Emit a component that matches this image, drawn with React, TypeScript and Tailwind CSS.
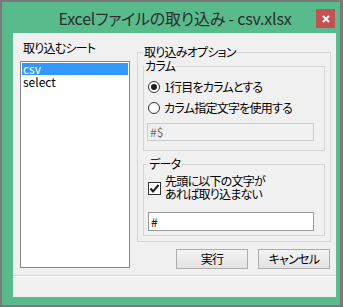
export default function App() {
  return (
    <div className="w-[343px] h-[307px] bg-[#7a7a7a] pt-[2px] pl-[2px] font-['Noto_Sans_CJK_JP','Noto_Sans',sans-serif] [font-feature-settings:'palt']">
      <div className="w-[338px] h-[303px] bg-[#58bb8b] flex flex-col">
        <div className="h-[31px] flex items-start">
          <div className="flex-1 pl-[32px] pt-[5px] text-center text-[16px] leading-[22px] text-[#2e2e2e] tracking-[-0.2px]">
            Excelファイルの取り込み - csv.xlsx
          </div>
          <div className="mt-[7px] mr-[5px] w-[19px] h-[19px] bg-[#c75050] flex items-center justify-center">
            <svg width="8" height="8" viewBox="0 0 8 8">
              <path d="M1 1 L7 7 M7 1 L1 7" stroke="#ffffff" strokeWidth="2" />
            </svg>
          </div>
        </div>
        <div className="ml-[11px] w-[323px] h-[264px] bg-[#f0f0f0] flex flex-col text-[12px] text-black tracking-[-0.75px]">
          <div className="flex items-start">
            <div className="ml-[7px] w-[110px] pt-[7px] flex flex-col">
              <div className="leading-[16px] pl-[3px]">取り込むシート</div>
              <div className="mt-[5px] h-[207px] border border-[#828790] bg-white p-[1px] tracking-normal">
                <div className="h-[12px] leading-[12px] bg-[#3399ff] text-white pl-[1px]">csv</div>
                <div className="h-[13px] leading-[13px] pl-[1px]">select</div>
              </div>
            </div>
            <div className="ml-[7px] w-[194px] pt-[12px] flex flex-col">
              <fieldset className="m-0 min-w-0 border border-[#d5d5d5] px-[5px] pb-[5px] pt-0">
                <legend className="px-[1px] leading-[14px]">取り込みオプション</legend>
                <fieldset className="m-0 min-w-0 border border-[#d5d5d5] px-0 pt-[3px] pb-[9px]">
                  <legend className="px-[1px] leading-[14px]">カラム</legend>
                  <div className="h-[21px] flex items-center pl-[4px]">
                    <span className="w-[12px] h-[12px] rounded-full border border-[#333333] bg-white flex items-center justify-center">
                      <span className="w-[6px] h-[6px] rounded-full bg-[#1e1e1e]" />
                    </span>
                    <span className="ml-[4px] leading-[14px]">1行目をカラムとする</span>
                  </div>
                  <div className="h-[21px] flex items-center pl-[4px]">
                    <span className="w-[12px] h-[12px] rounded-full border border-[#333333] bg-white" />
                    <span className="ml-[4px] leading-[14px]">カラム指定文字を使用する</span>
                  </div>
                  <div className="mt-[5px] ml-[3px] w-[167px] h-[18px] border border-[#cccccc] bg-[#f0f0f0] text-[#6d6d6d] pl-[2px] leading-[16px] tracking-normal">
                    #$
                  </div>
                </fieldset>
                <fieldset className="mt-[6px] min-w-0 border border-[#d5d5d5] px-0 pt-[3px] pb-[4px]">
                  <legend className="ml-[4px] px-[1px] leading-[14px]">データ</legend>
                  <div className="flex items-center pl-[4px]">
                    <span className="mt-[3px] w-[13px] h-[13px] border border-[#333333] bg-white flex items-center justify-center">
                      <svg width="11" height="11" viewBox="0 0 11 11">
                        <path d="M1.5 5.5 L4 8.5 L9.5 2" stroke="#1e1e1e" strokeWidth="2" fill="none" />
                      </svg>
                    </span>
                    <div className="ml-[4px] leading-[13px]">
                      先頭に以下の文字が
                      <br />
                      あれば取り込まない
                    </div>
                  </div>
                  <div className="mt-[12px] ml-[4px] w-[166px] h-[19px] border border-[#9a9a9a] bg-white pl-[2px] leading-[17px] tracking-normal">
                    #
                  </div>
                </fieldset>
              </fieldset>
              <div className="mt-[7px] flex justify-end gap-[10px] pr-[1px]">
                <div className="w-[72px] h-[20px] border border-[#acacac] bg-gradient-to-b from-[#f2f2f2] to-[#e3e3e3] flex items-center justify-center leading-[14px]">
                  実行
                </div>
                <div className="w-[72px] h-[20px] border border-[#acacac] bg-gradient-to-b from-[#f2f2f2] to-[#e3e3e3] flex items-center justify-center leading-[14px]">
                  キャンセル
                </div>
              </div>
            </div>
          </div>
          <div className="mt-[6px] h-[1px] bg-[#d7d7d7]" />
          <div className="h-[1px] bg-white" />
        </div>
      </div>
    </div>
  );
}
